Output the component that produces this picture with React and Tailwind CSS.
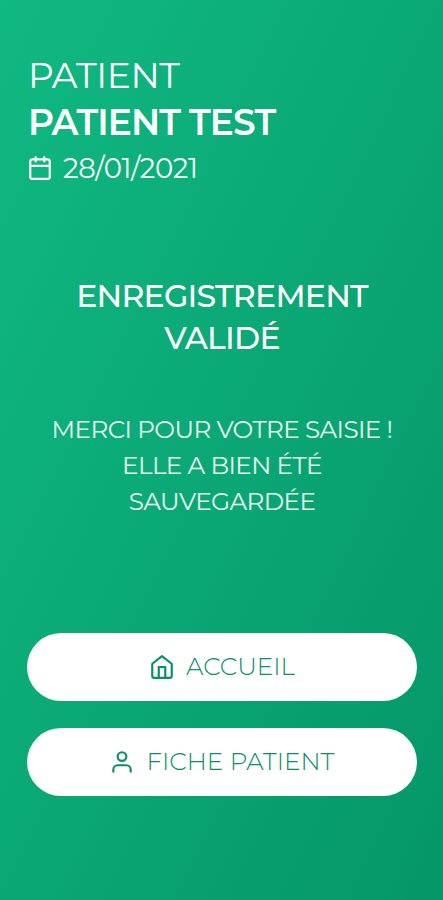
import { FiHome, FiUser, FiCalendar } from "react-icons/fi";

const patient = {
  name: "PATIENT TEST",
  date: "28/01/2021",
};

function PillButton({ icon, children }) {
  return (
    <button
      type="button"
      className="flex h-[68px] w-full items-center justify-center gap-[11px] rounded-full bg-white pb-[1px] text-[24.7px] font-light text-[#0b9065]"
    >
      {icon}
      {children}
    </button>
  );
}

export default function App() {
  return (
    <div className="flex h-screen w-full flex-col overflow-hidden bg-linear-to-br/srgb from-[#10b981] to-[#059669] pr-[26px] pl-[27px] pt-[52px] font-['Montserrat','Inter',sans-serif] text-white">
      <header className="pl-[1px]">
        <p className="text-[36px] leading-[46px] font-normal tracking-[-0.4px]">
          <span>PATIENT</span>
        </p>
        <h1 className="text-[36px] leading-[48px] font-semibold tracking-tight whitespace-nowrap">
          <span>{patient.name}</span>
        </h1>
        <p className="flex h-[44px] items-center gap-[10px] text-[27.5px] tracking-[-0.4px]">
          <FiCalendar size={26} className="-ml-px" />
          <span className="pt-[2px]">{patient.date}</span>
        </p>
      </header>

      <h2 className="mt-[85px] text-center text-[31.6px] leading-[41.5px] font-medium tracking-tight">
        <span className="block">ENREGISTREMENT</span>
        <span className="block">VALIDÉ</span>
      </h2>

      <p className="mt-[53px] text-center text-[24.7px] leading-[36px] tracking-tight whitespace-nowrap text-white/90">
        <span className="block">MERCI POUR VOTRE SAISIE !</span>
        <span className="block">ELLE A BIEN ÉTÉ</span>
        <span className="block">SAUVEGARDÉE</span>
      </p>

      <div className="mt-[114px] flex flex-col gap-[27px]">
        <PillButton icon={<FiHome size={26} />}>
          <span>ACCUEIL</span>
        </PillButton>
        <PillButton icon={<FiUser size={26} />}>
          <span>FICHE PATIENT</span>
        </PillButton>
      </div>
    </div>
  );
}
